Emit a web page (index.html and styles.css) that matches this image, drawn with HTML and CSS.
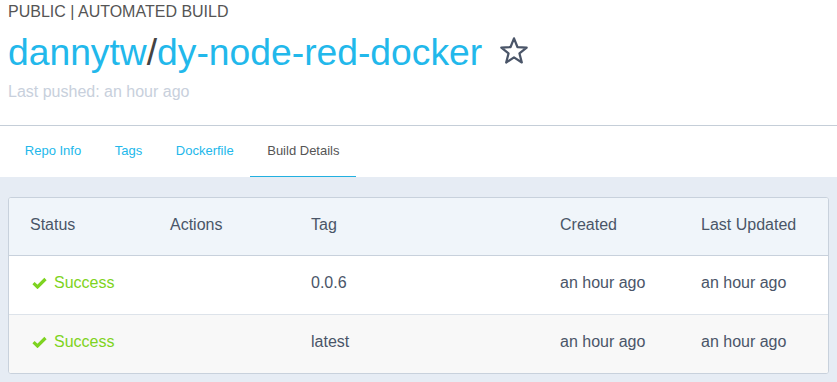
FILE: index.html
```html
<!DOCTYPE html>
<html lang="en">
<head>
    <meta charset="UTF-8">
    <title>dannytw/dy-node-red-docker</title>
    <link rel="stylesheet" href="styles.css">
</head>
<body>
    <div class="repo-header">
        <div class="repo-type">PUBLIC | AUTOMATED BUILD</div>
        <h1 class="repo-title">
            <a href="#">dannytw</a><span class="slash">/</span><a href="#">dy-node-red-docker</a>
            <svg class="star" width="30" height="30" viewBox="0 0 28 28">
                <path d="M14 2.2 L17.2 10.3 L25.8 10.8 L19.1 16.3 L21.3 24.7 L14 20 L6.7 24.7 L8.9 16.3 L2.2 10.8 L10.8 10.3 Z" fill="none" stroke="#4a5568" stroke-width="2.1" stroke-linejoin="round"/>
            </svg>
        </h1>
        <div class="last-pushed">Last pushed: an hour ago</div>
    </div>

    <nav class="tabs">
        <a class="tab" href="#">Repo Info</a>
        <a class="tab" href="#">Tags</a>
        <a class="tab" href="#">Dockerfile</a>
        <a class="tab active" href="#">Build Details</a>
    </nav>

    <div class="content">
        <div class="builds">
            <div class="row head">
                <div>Status</div>
                <div>Actions</div>
                <div>Tag</div>
                <div>Created</div>
                <div>Last Updated</div>
            </div>
            <div class="row">
                <div class="status">
                    <svg width="15" height="12" viewBox="0 0 15 12"><path d="M1.5 6.2 L5.5 10 L13.5 2" fill="none" stroke="#7ed321" stroke-width="3.2"/></svg>
                    Success
                </div>
                <div></div>
                <div>0.0.6</div>
                <div>an hour ago</div>
                <div>an hour ago</div>
            </div>
            <div class="row alt">
                <div class="status">
                    <svg width="15" height="12" viewBox="0 0 15 12"><path d="M1.5 6.2 L5.5 10 L13.5 2" fill="none" stroke="#7ed321" stroke-width="3.2"/></svg>
                    Success
                </div>
                <div></div>
                <div>latest</div>
                <div>an hour ago</div>
                <div>an hour ago</div>
            </div>
        </div>
    </div>
</body>
</html>
```

FILE: styles.css
```css
body {
    margin: 0;
    font-family: "Liberation Sans", Arial, sans-serif;
    background-color: #fff;
    color: #4a5568;
}

a {
    text-decoration: none;
}

.repo-header {
    padding: 0 8px 23px;
    border-bottom: 1px solid #c5ced8;
}

.repo-type {
    font-size: 16px;
    line-height: 24px;
    color: #555;
}

.repo-title {
    display: flex;
    align-items: center;
    margin: 4px 0 0;
    font-size: 37.25px;
    font-weight: normal;
    line-height: 48px;
}

.repo-title a {
    color: #22b8eb;
}

.repo-title .slash {
    color: #444;
}

.star {
    margin-left: 17px;
    margin-top: -3px;
}

.last-pushed {
    margin-top: 5px;
    font-size: 16px;
    line-height: 21px;
    color: #c8d0dc;
}

.tabs {
    display: flex;
    padding-left: 8px;
    height: 51px;
}

.tab {
    display: flex;
    align-items: center;
    padding: 0 16.8px 2px;
    font-size: 13px;
    color: #22b8eb;
    border-bottom: 1px solid transparent;
}

.tab.active {
    color: #555;
    border-bottom-color: #22b0e0;
}

.content {
    background-color: #e6ecf4;
    padding: 20px 8px 8px;
}

.builds {
    background-color: #fff;
    border: 1px solid #c8d1dc;
    border-radius: 3px;
    overflow: hidden;
}

.row {
    display: grid;
    grid-template-columns: 140px 141px 249px 141px 1fr;
    align-items: center;
    box-sizing: border-box;
    height: 59px;
    padding: 0 0 4px 21px;
    font-size: 16px;
    border-top: 1px solid #dde3ea;
}

.row.head {
    height: 58px;
    background-color: #f0f5fa;
    border-top: none;
    border-bottom: 1px solid #c8d1dc;
}

.row.head + .row {
    height: 58px;
    border-top: none;
}

.row.alt {
    background-color: #f8f8f8;
}

.status {
    display: flex;
    align-items: center;
    gap: 7px;
    color: #7ed321;
    padding-left: 2px;
}
```
